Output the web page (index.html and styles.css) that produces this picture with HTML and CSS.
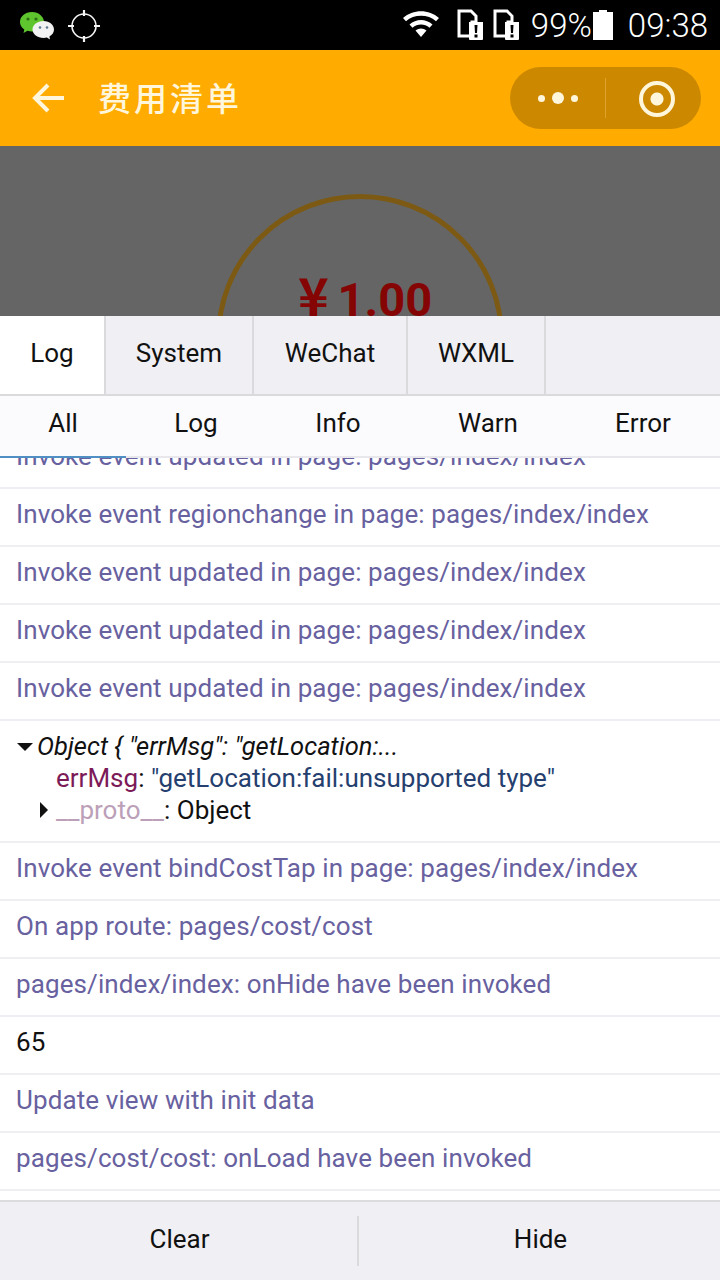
FILE: index.html
```html
<!DOCTYPE html>
<html lang="en">
<head>
<meta charset="utf-8">
<title>费用清单</title>
<link rel="stylesheet" href="styles.css">
</head>
<body>
<div class="app">
  <header class="status">
    <div class="status-left">
      <svg class="ic-wechat" width="36" height="30" viewBox="0 0 36 30">
        <path d="M13 1C6 1 1 5.500 1 11c0 3.200 1.700 5.800 4.300 7.600L4.500 22l4-2.200c1.500.5 3 .7 4.500.7 7 0 12-4.500 12-9.500S20 1 13 1z" fill="#5fc52e"/>
        <circle cx="9" cy="8" r="1.600" fill="#2c6e14"/><circle cx="17" cy="8" r="1.600" fill="#2c6e14"/>
        <path d="M24.500 10C18.500 10 13.500 14 13.500 18.500S18.500 27 24.500 27c1.200 0 2.300-.2 3.400-.5l3.100 2-.6-3c3-1.600 4.600-4.200 4.600-7C35 14 30.500 10 24.500 10z" fill="#f2f2f2"/>
        <circle cx="21" cy="16.500" r="1.300" fill="#5d7a90"/><circle cx="28" cy="16.500" r="1.300" fill="#5d7a90"/>
      </svg>
      <svg width="34" height="34" viewBox="0 0 34 34" class="ic-gps">
        <circle cx="17" cy="17" r="12" fill="none" stroke="#f4f4f4" stroke-width="1.600"/>
        <path d="M17 1v6M17 27v6M1 17h6M27 17h6" stroke="#f4f4f4" stroke-width="2.200"/>
      </svg>
    </div>
    <div class="status-right">
      <svg width="38" height="30" viewBox="0 0 38 30" class="ic-wifi">
        <path d="M1 9C11 0 27 0 37 9l-3 3.200C26 5 12 5 4 12.200z" fill="#fff"/>
        <path d="M7.500 15.500c6.500-6 16.500-6 23 0l-3 3.200c-5-4.300-12-4.300-17 0z" fill="#fff"/>
        <path d="M13.500 21.500c3.200-2.700 7.800-2.700 11 0L19 28z" fill="#fff"/>
      </svg>
      <svg width="26" height="32" viewBox="0 0 26 32" class="ic-sim">
        <path d="M2 2h12l5 5v6h-4v14H2z" fill="none" stroke="#fff" stroke-width="3"/>
        <path d="M12 13h14v17a1 1 0 0 1-1 1H13a1 1 0 0 1-1-1z" fill="#fff"/>
        <path d="M17.500 16h3l-.5 8h-2zM17.500 25.500h3v3h-3z" fill="#000"/>
      </svg>
      <svg width="26" height="32" viewBox="0 0 26 32" class="ic-sim">
        <path d="M2 2h12l5 5v6h-4v14H2z" fill="none" stroke="#fff" stroke-width="3"/>
        <path d="M12 13h14v17a1 1 0 0 1-1 1H13a1 1 0 0 1-1-1z" fill="#fff"/>
        <path d="M17.500 16h3l-.5 8h-2zM17.500 25.500h3v3h-3z" fill="#000"/>
      </svg>
      <span class="pct">99%</span>
      <svg width="20" height="30" viewBox="0 0 20 30" class="ic-batt">
        <path d="M6 0h8v2h6v28H0V2h6z" fill="#fff"/>
      </svg>
      <span class="time">09:38</span>
    </div>
  </header>
  <nav class="nav">
    <svg class="back" width="34" height="32" viewBox="0 0 34 32">
      <path d="M32 16H4M16 3 3 16l13 13" fill="none" stroke="#fff6dc" stroke-width="4"/>
    </svg>
    <h1 class="title">费用清单</h1>
    <div class="capsule">
      <div class="cap-part">
        <span class="dot"></span><span class="dot dot-big"></span><span class="dot"></span>
      </div>
      <div class="cap-sep"></div>
      <div class="cap-part">
        <span class="target"></span>
      </div>
    </div>
  </nav>
  <main class="page">
    <div class="circle">
      <div class="amount"><span class="yen">¥</span>1.00</div>
    </div>
  </main>

  <section class="console">
    <div class="tabs">
      <div class="tab tab-on w-log">Log</div>
      <div class="tab w-sys">System</div>
      <div class="tab w-wc">WeChat</div>
      <div class="tab w-wx">WXML</div>
    </div>
    <div class="filters">
      <div class="filter f-all">All</div>
      <div class="filter f-log">Log</div>
      <div class="filter f-info">Info</div>
      <div class="filter f-warn">Warn</div>
      <div class="filter f-err">Error</div>
    </div>
    <div class="logs">
      <div class="logs-inner">
        <div class="row info">Invoke event updated in page: pages/index/index</div>
        <div class="row info">Invoke event regionchange in page: pages/index/index</div>
        <div class="row info">Invoke event updated in page: pages/index/index</div>
        <div class="row info">Invoke event updated in page: pages/index/index</div>
        <div class="row info">Invoke event updated in page: pages/index/index</div>
        <div class="row obj">
          <div class="obj-line"><span class="tri-down"></span><em class="obj-head">Object { "errMsg": "getLocation:...</em></div>
          <div class="obj-line obj-in"><span class="k">errMsg</span>: <span class="s">"getLocation:fail:unsupported type"</span></div>
          <div class="obj-line obj-in2"><span class="tri-right"></span><span class="p">__proto__</span>: Object</div>
        </div>
        <div class="row info">Invoke event bindCostTap in page: pages/index/index</div>
        <div class="row info">On app route: pages/cost/cost</div>
        <div class="row info">pages/index/index: onHide have been invoked</div>
        <div class="row">65</div>
        <div class="row info">Update view with init data</div>
        <div class="row info">pages/cost/cost: onLoad have been invoked</div>
      </div>
    </div>
    <div class="foot">
      <div class="foot-btn">Clear</div>
      <div class="foot-sep"></div>
      <div class="foot-btn">Hide</div>
    </div>
  </section>
</div>
</body>
</html>
```
FILE: styles.css
```css
* { box-sizing: border-box; }
html, body { margin: 0; padding: 0; }
body { font-family: Roboto, "Noto Sans CJK SC", sans-serif; background: #fff; }
.app { position: relative; width: 720px; height: 1280px; overflow: hidden; display: flex; flex-direction: column; }

.status { height: 50px; background: #000; display: flex; align-items: center; justify-content: space-between; padding: 0 12px 0 19px; color: #fff; }
.status-left { display: flex; align-items: center; gap: 12px; }
.status-right { display: flex; align-items: center; }
.ic-wechat { margin-top: 2px; }
.ic-gps { margin-top: 1px; }
.ic-wifi { margin-right: 17px; margin-top: -2px; }
.ic-sim { margin-right: 10px; margin-top: -1px; }
.pct { font-size: 33px; font-weight: 300; margin-left: 2px; }
.ic-batt { margin-left: 1px; }
.time { font-size: 33px; font-weight: 300; margin-left: 15px; }

.nav { height: 96px; background: #ffab00; display: flex; align-items: center; padding: 0 19px 0 32px; }
.back { flex: none; }
.title { margin: 0 0 2px 32px; font-size: 33px; font-weight: 500; color: #fff6dc; flex: 1; letter-spacing: 3px; font-family: "Noto Sans CJK SC", sans-serif; }
.capsule { width: 191px; height: 62px; border-radius: 31px; background: #cc8900; display: flex; align-items: center; }
.cap-part { flex: 1; display: flex; align-items: center; justify-content: center; gap: 7px; }
.cap-sep { width: 1px; height: 40px; background: #dfa32c; }
.dot { width: 7px; height: 7px; border-radius: 50%; background: #fff6dc; }
.dot-big { width: 12px; height: 12px; }
.target { width: 36px; height: 36px; border-radius: 50%; border: 4px solid #fff6dc; background: radial-gradient(circle, #fff6dc 0 6px, transparent 7px); margin: 1px 0 0 6px; }

.page { flex: 1; background: #656565; display: flex; justify-content: center; padding-top: 48px; }
.circle { width: 288px; height: 288px; border-radius: 50%; border: 5px solid #7d5a14; text-align: center; padding: 71px 0 0 10px; }
.amount { font-size: 47px; font-weight: 700; color: #850404; line-height: 60px; }
.yen { font-family: "Noto Sans CJK SC", sans-serif; font-size: 52px; line-height: 0; margin-right: 9px; }

.console { position: absolute; left: 0; right: 0; top: 316px; bottom: 0; background: #fff; display: flex; flex-direction: column; }
.tabs { height: 80px; display: flex; background: #f0eff3; border-bottom: 2px solid #dadadd; flex: none; }
.tab { display: flex; align-items: center; justify-content: center; font-size: 26px; color: #111; border-right: 2px solid #dadadd; padding-bottom: 4px; }
.tab-on { background: #fff; }
.w-log { width: 106px; }
.w-sys { width: 148px; }
.w-wc { width: 154px; }
.w-wx { width: 138px; }

.filters { height: 62px; flex: none; display: flex; background: #fbfafd; border-bottom: 2px solid #e8e8ec; position: relative; z-index: 1; }
.filter { display: flex; align-items: center; justify-content: center; font-size: 26px; color: #111; padding-bottom: 6px; flex: none; }
.f-all { width: 126px; }
.f-log { width: 140px; }
.f-info { width: 144px; }
.f-warn { width: 156px; }
.f-err { width: 154px; }
.f-all::after { content: ""; position: absolute; left: 0; bottom: -2px; width: 126px; height: 2px; background: #4f8fc4; }

.logs { flex: 1; overflow: hidden; min-height: 0; }
.logs-inner { margin-top: -27px; }
.row { min-height: 58px; display: flex; flex-direction: column; justify-content: center; padding: 0 16px 6px; font-size: 26px; letter-spacing: 0.1px; color: #111; border-bottom: 2px solid #efeef2; }
.info { color: #68619f; }
.obj { height: 122px; padding-bottom: 6px; letter-spacing: 0; }
.obj-line { line-height: 32px; white-space: nowrap; display: flex; align-items: center; }
.obj-head { font-size: 25.500px; color: #111; }
.obj-in { padding-left: 40px; white-space: pre; }
.obj-in2 { padding-left: 24px; white-space: pre; }
.k { color: #7c1a58; }
.s { color: #25406f; }
.p { color: #bc9fb8; }
.tri-down { width: 0; height: 0; border-left: 8px solid transparent; border-right: 8px solid transparent; border-top: 8px solid #111; margin: 2px 4px 0 1px; flex: none; }
.tri-right { width: 0; height: 0; border-top: 8px solid transparent; border-bottom: 8px solid transparent; border-left: 8px solid #111; margin-right: 8px; flex: none; }

.foot { height: 80px; flex: none; display: flex; align-items: center; background: #f0eff3; border-top: 2px solid #dcdcdf; }
.foot-btn { flex: 1; text-align: center; font-size: 26px; color: #111; padding-bottom: 4px; }
.foot-sep { width: 2px; height: 50px; background: #dadadd; flex: none; margin: 0 2px 0 -2px; }
```
